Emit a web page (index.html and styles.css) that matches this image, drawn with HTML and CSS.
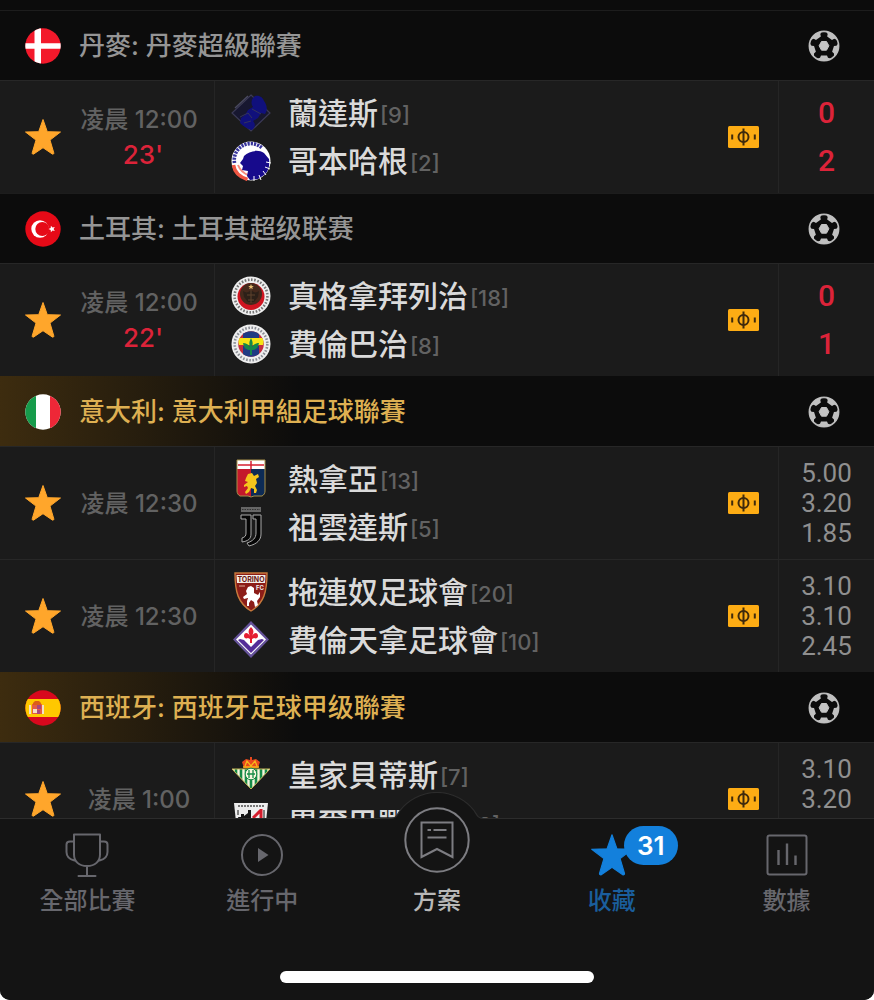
FILE: index.html
```html
<!DOCTYPE html>
<html lang="zh-Hant">
<head>
<meta charset="utf-8">
<meta name="viewport" content="width=device-width, initial-scale=1">
<title>收藏</title>
<link rel="stylesheet" href="styles.css">
</head>
<body>
<svg class="sprite" aria-hidden="true">
  <symbol id="star" viewBox="0 0 38 38">
    <path d="M19 1.500 23.300 13.700 36.500 14 26 22.100 29.800 34.900a1 1 0 0 1-1.500 1.100L19 29.700 9.700 36a1 1 0 0 1-1.500-1.100L12 22.100 1.500 14 14.700 13.700Z" fill="currentColor" stroke="currentColor" stroke-width="1" stroke-linejoin="round"/>
  </symbol>
  <symbol id="ball" viewBox="0 0 32 32">
    <clipPath id="ball-clip"><circle cx="16" cy="16" r="15"/></clipPath>
    <circle cx="16" cy="16" r="14.600" fill="none" stroke="#b9b9b9" stroke-width="1.700"/>
    <g fill="#c0c0c0" clip-path="url(#ball-clip)">
      <path id="patch" d="M13 25.500h6l1 2.300 3.500 1.200V32h-15v-3l3.500-1.200Z"/>
      <use href="#patch" transform="rotate(72 16 16)"/>
      <use href="#patch" transform="rotate(144 16 16)"/>
      <use href="#patch" transform="rotate(216 16 16)"/>
      <use href="#patch" transform="rotate(288 16 16)"/>
    </g>
    <path d="M13.500 11.500h5l2.400 4.300-2.400 4.400h-5l-2.400-4.400Z" fill="#c4c4c4" stroke="#c4c4c4" stroke-linejoin="round"/>
  </symbol>
  <symbol id="pitch" viewBox="0 0 31 22">
    <rect width="31" height="22" rx="1.500" fill="#fdac14"/>
    <g fill="none" stroke="#3f2a0c" stroke-width="2">
      <circle cx="15.500" cy="11" r="5"/><path d="M15.500 2.500v17M4.200 8.500v5M26.800 8.500v5"/>
    </g>
  </symbol>
</svg>

<div class="app">
<main class="feed">

  <section class="league">
    <header class="league-head">
      <svg class="flag" viewBox="0 0 36 36" role="img" aria-label="丹麥"><clipPath id="disc"><circle cx="18" cy="18" r="17.700"/></clipPath><g clip-path="url(#disc)"><path fill="#f3192b" d="M0 0h36v36H0z"/><path fill="#fff" d="M9.500 0h6.500v36H9.500zM0 15.200h36v5.600H0z"/></g></svg>
      <h2>丹麥: 丹麥超級聯賽</h2>
      <svg class="ball" aria-hidden="true"><use href="#ball"/></svg>
    </header>
    <article class="match">
      <div class="when"><button class="fav" aria-label="取消收藏"><svg><use href="#star"/></svg></button><div class="clock"><time>凌晨 12:00</time><strong>23'</strong></div></div>
      <div class="teams">
        <div class="team"><svg class="crest" viewBox="0 0 40 40" aria-hidden="true"><path fill="#171730" stroke="#3b3a55" stroke-width="1.200" d="M20 2 39 20 20 38 1 20Z"/><path fill="#10107c" d="M24 3c5-1 8 2 9 5 3 4 4 9 1 13l-4-1-3 5-5 3c3 3 2 7-1 9-5-1-9-4-12-7l1-5 4-3 3-5 5-3c-3-4-1-9 2-11Z"/><path stroke="#4a4a62" stroke-width="1.400" fill="none" d="M4 15 17 3"/><path stroke="#34345c" stroke-width="1" fill="none" d="M9 24l8-4 4 5M13 30l7-2M21 16l9 5"/></svg><span class="name">蘭達斯</span><span class="rank">[9]</span></div>
        <div class="team"><svg class="crest" viewBox="0 0 40 40" aria-hidden="true"><circle cx="20" cy="20" r="19.500" fill="#fff"/><path d="M3.500 22A16.500 16.500 0 0 1 31 7" fill="none" stroke="#37349b" stroke-width="3.600" stroke-dasharray="2.200 1"/><path d="M2.500 24c1 7 6 12 14 14.500" fill="none" stroke="#ef5643" stroke-width="3.500"/><path d="M7 24c2 5 5 8 10 10" fill="none" stroke="#f58c7e" stroke-width="2"/><path fill="#170a8c" d="M13 15c5-5 14-7 20-3l5 6c1 8-1 13-5 16l-6 4-8 1-3-4 1-5-6-1 1-4-3-3 3-4Z"/><path stroke="#fff" stroke-width="1" d="m28 34 2 5M32 30l3 4M34 26l5 2M35 21l5 1M23 35v5"/></svg><span class="name">哥本哈根</span><span class="rank">[2]</span></div>
      </div>
      <button class="live" aria-label="現場動畫"><svg><use href="#pitch"/></svg></button>
      <div class="score"><span>0</span><span>2</span></div>
    </article>
  </section>

  <section class="league">
    <header class="league-head">
      <svg class="flag" viewBox="0 0 36 36" role="img" aria-label="土耳其"><circle cx="18" cy="18" r="17.700" fill="#e60a17"/><circle cx="15" cy="18" r="8.700" fill="#fff"/><circle cx="17.300" cy="18" r="7" fill="#e60a17"/><path fill="#fff" d="m23.500 18 2.200-.9.200-2.400 1.600 1.800 2.300-.6-1.200 2.100 1.200 2.100-2.300-.6-1.600 1.800-.2-2.400Z"/></svg>
      <h2>土耳其: 土耳其<span lang="zh-Hans">超级联赛</span></h2>
      <svg class="ball" aria-hidden="true"><use href="#ball"/></svg>
    </header>
    <article class="match">
      <div class="when"><button class="fav" aria-label="取消收藏"><svg><use href="#star"/></svg></button><div class="clock"><time>凌晨 12:00</time><strong>22'</strong></div></div>
      <div class="teams">
        <div class="team"><svg class="crest" viewBox="0 0 40 40" aria-hidden="true"><circle cx="20" cy="20" r="19.500" fill="#eee"/><circle cx="20" cy="20" r="16.400" fill="none" stroke="#777" stroke-width="2.600" stroke-dasharray="1.600 1.600"/><circle cx="20" cy="20.500" r="13.500" fill="#d01420"/><circle cx="20" cy="18" r="11" fill="#45291c"/><path d="M12 15c3 2 5 2 8-1 3 3 5 3 8 1l-1 6-4 5h-6l-4-5Z" fill="#2c2018"/><path d="M20 12v15M16 19h8M17 24h6" stroke="#5e422c"/><path d="m20 8 .8 2h2l-1.600 1.300.6 2-1.800-1.200-1.800 1.200.6-2L17.200 10h2Z" fill="#e7bd72"/></svg><span class="name">真格拿拜列治</span><span class="rank">[18]</span></div>
        <div class="team"><svg class="crest" viewBox="0 0 40 40" aria-hidden="true"><circle cx="20" cy="20" r="19.500" fill="#eee"/><circle cx="20" cy="20" r="16.300" fill="none" stroke="#8b8e96" stroke-width="2.600" stroke-dasharray="1.600 1.600"/><clipPath id="fb"><circle cx="20" cy="20" r="12.800"/></clipPath><g clip-path="url(#fb)"><path fill="#c42d3e" d="M6 6h28v28H6z"/><path fill="#203a83" d="M12 6h16v10H12zM12 22h16v12H12z"/><path fill="#f6e415" d="M6 14h28l-2 7H8z"/></g><path fill="#16874a" d="M20 14c2 4 2 6 1 9 2-3 4-4 7-4-1 5-3 7-7 7v5h-2v-5c-4 0-6-2-7-7 3 0 5 1 7 4-1-3-1-5 1-9Z"/></svg><span class="name">費倫巴治</span><span class="rank">[8]</span></div>
      </div>
      <button class="live" aria-label="現場動畫"><svg><use href="#pitch"/></svg></button>
      <div class="score"><span>0</span><span>1</span></div>
    </article>
  </section>

  <section class="league">
    <header class="league-head top">
      <svg class="flag" viewBox="0 0 36 36" role="img" aria-label="意大利"><g clip-path="url(#disc)"><path fill="#fff" d="M0 0h36v36H0z"/><path fill="#169b4b" d="M0 0h11v36H0z"/><path fill="#ee2737" d="M25 0h11v36H25z"/></g></svg>
      <h2>意大利: 意大利甲組足球聯賽</h2>
      <svg class="ball" aria-hidden="true"><use href="#ball"/></svg>
    </header>
    <article class="match">
      <div class="when"><button class="fav" aria-label="取消收藏"><svg><use href="#star"/></svg></button><div class="clock"><time>凌晨 12:30</time></div></div>
      <div class="teams">
        <div class="team"><svg class="crest" viewBox="0 0 40 40" aria-hidden="true"><path fill="#c4192b" d="M6 1h14v37l-3-1H9c-2-1-3-3-3-5Z"/><path fill="#0d2b55" d="M20 1h14v31c0 2-1 4-3 5h-8l-3 1Z"/><path fill="#fff" d="M6 1h28v9H6z"/><path stroke="#d62031" stroke-width="1.500" d="M20 2v8M7 6h26"/><path fill="#f5c51c" d="m17 15 4-1 2 3 4-2 1 3-3 2 1 4-2 3 2 4-1 3h-2v-4l-3-1-2 4-3 2-1-2 3-4-1-2-3 1v-2l4-3-3-1 1-3Z"/><path d="M6 1h28v31c0 2-1 4-3 5h-8l-3 1-3-1H9c-2-1-3-3-3-5Z" fill="none" stroke="#a8904a"/></svg><span class="name">熱拿亞</span><span class="rank">[13]</span></div>
        <div class="team"><svg class="crest" viewBox="0 0 40 40" aria-hidden="true"><path fill="#666" d="M10 0h20v5H10z"/><path stroke="#333" stroke-dasharray="1.500 1" d="M11 2.500h18"/><path fill="#050505" stroke="#aaa" d="M10 8h10v19c0 5-3 7-9 8v-4c3-1 4-2 4-5V12h-5ZM22 8h8v19c0 6-4 10-12 12l-2-3c6-2 9-5 9-10V12h-3Z"/></svg><span class="name">祖雲達斯</span><span class="rank">[5]</span></div>
      </div>
      <button class="live" aria-label="現場動畫"><svg><use href="#pitch"/></svg></button>
      <div class="odds"><span>5.00</span><span>3.20</span><span>1.85</span></div>
    </article>
    <article class="match">
      <div class="when"><button class="fav" aria-label="取消收藏"><svg><use href="#star"/></svg></button><div class="clock"><time>凌晨 12:30</time></div></div>
      <div class="teams">
        <div class="team"><svg class="crest" viewBox="0 0 40 40" aria-hidden="true"><path fill="#8c1d18" stroke="#c7793c" stroke-width="1.400" d="M4 1h32c0 19-3 30-16 38C7 31 4 20 4 1Z"/><path fill="#f3eee7" d="M5.500 3h29l-.5 8H6z"/><text class="crest-word" x="20" y="9.500">TORINO</text><text class="crest-mark" x="29" y="18">FC</text><path d="M8 14h6" stroke="#d8aa94"/><path fill="#fff" d="m17 15 3-1 3 2v5l4 2 2-3v5l-3 4 1 4-3 2-1-5-3-2-2 3v3h-2v-5l1-3-4 1-1-2 4-3-1-3Z"/></svg><span class="name">拖連奴足球會</span><span class="rank">[20]</span></div>
        <div class="team"><svg class="crest" viewBox="0 0 40 40" aria-hidden="true"><path fill="#65529a" d="m20 1 18 18.500L20 38 2 19.500Z"/><path fill="#fff" d="m20 4.500 15 15-15 15-15-15Z"/><path fill="#542c98" d="m9 19 4 1 7 7 7-7 4-1 2 1-13 13L7 20Z"/><path fill="#e51e32" d="M20 7c3 3 3 5 1 9 2-4 6-4 6 0 0 2-2 3-4 2l-2 1v4h-2v-4l-2-1c-2 1-4 0-4-2 0-4 4-4 6 0-2-4-2-6 1-9Z"/></svg><span class="name">費倫天拿足球會</span><span class="rank">[10]</span></div>
      </div>
      <button class="live" aria-label="現場動畫"><svg><use href="#pitch"/></svg></button>
      <div class="odds"><span>3.10</span><span>3.10</span><span>2.45</span></div>
    </article>
  </section>

  <section class="league">
    <header class="league-head top">
      <svg class="flag" viewBox="0 0 36 36" role="img" aria-label="西班牙"><g clip-path="url(#disc)"><path fill="#d8081d" d="M0 0h36v36H0z"/><path fill="#ffc800" d="M0 9h36v18H0z"/></g><path fill="#e35b43" d="M7 14h10v10H7z"/><path fill="#f4dfc6" d="M4 15h2v9H4zM17 15h2v9h-2zM8 19h4v4H8z"/><path fill="#a8447c" d="M12 15h4v4h-4zM12 20h3v4h-3z"/><path fill="#db5d18" d="m8 13 2-2h4l2 2v2H8z"/></svg>
      <h2>西班牙: 西班牙足球甲级聯賽</h2>
      <svg class="ball" aria-hidden="true"><use href="#ball"/></svg>
    </header>
    <article class="match">
      <div class="when"><button class="fav" aria-label="取消收藏"><svg><use href="#star"/></svg></button><div class="clock"><time>凌晨 1:00</time></div></div>
      <div class="teams">
        <div class="team"><svg class="crest" viewBox="0 0 40 40" aria-hidden="true"><path fill="#e9471d" d="m13 13-2-6 4-3 4 1V2h2v3l4-1 4 3-2 6Z"/><path d="m14 11 2-5 4 5 4-5 2 5M12 12h16" stroke="#f6b719" stroke-width="1.300" fill="none"/><clipPath id="tri"><path d="M1 14h38L20 34Z"/></clipPath><g clip-path="url(#tri)"><path fill="#f7f6df" d="M0 13h40v22H0z"/><path stroke="#168b47" stroke-width="2.600" d="M5 13v22M10 13v22M15 13v22M20 13v22M25 13v22M30 13v22M35 13v22"/></g><path d="M1 14h38L20 34Z" fill="none" stroke="#c5b756"/><circle cx="20" cy="19" r="5.800" fill="#f7f6df" stroke="#168b47"/><path d="M18 15v8M22 15v8M16 19h8" stroke="#168b47" stroke-width="1.300"/></svg><span class="name">皇家貝蒂斯</span><span class="rank">[7]</span></div>
        <div class="team"><svg class="crest" viewBox="0 0 40 40" aria-hidden="true"><path fill="#eee" d="M3 0h34l-3 28-14 11L6 28Z"/><path d="M7 3h26" stroke="#777" stroke-width="2" stroke-dasharray="2 1"/><path fill="#151515" d="M7 14h3v-3h3v2l4-3V7h3v23l-8-2Z"/><path stroke="#d41c2c" stroke-width="3" d="m22 15 8-8M30 6v24M25 15v15"/><path stroke="#151515" d="M7 7v5M33 7v8"/></svg><span class="name">畢爾巴鄂競技</span><span class="rank">[8]</span></div>
      </div>
      <button class="live" aria-label="現場動畫"><svg><use href="#pitch"/></svg></button>
      <div class="odds"><span>3.10</span><span>3.20</span></div>
    </article>
  </section>
</main>

<footer class="dock">
  <svg class="bump" viewBox="0 0 116 50" aria-hidden="true"><path d="M0 26.500H12C17 26.500 18 23 21 18.500A47 47 0 0 1 95 18.500C98 23 99 26.500 104 26.500H116V50H0Z" fill="#141414"/><path d="M0 26.500H12C17 26.500 18 23 21 18.500A47 47 0 0 1 95 18.500C98 23 99 26.500 104 26.500H116" fill="none" stroke="#2c2c2c" stroke-width="1.200"/></svg>
  <nav class="tabs">
    <a href="#all"><svg class="icon" viewBox="0 0 44 44" aria-hidden="true"><g fill="none" stroke="currentColor" stroke-width="2" stroke-linejoin="round" stroke-linecap="round"><path d="M9 1.500h26v20c0 7-5 11.500-13 11.500S9 28.500 9 21.500ZM22 33v9.500M13.500 43h17M8.500 8.500H5c-2 0-3.500 1-3.500 3V19c0 5 4 7.500 8 8.500M35.500 8.500H39c2 0 3.500 1 3.500 3V19c0 5-4 7.500-8 8.500"/></g></svg><span>全部比賽</span></a>
    <a href="#live"><svg class="icon" viewBox="0 0 44 44" aria-hidden="true"><circle cx="22" cy="22" r="20" fill="none" stroke="currentColor" stroke-width="2"/><path d="m18 15 10.500 7L18 29Z" fill="currentColor"/></svg><span>進行中</span></a>
    <a href="#plan" class="plan"><svg class="icon big" viewBox="0 0 66 66" aria-hidden="true"><g fill="none" stroke="currentColor" stroke-width="2"><circle cx="33" cy="33" r="31.700"/><path d="M17.500 15.500h31v34.500L33 42 17.500 50ZM23.500 23h3.500M29.500 23h13M23.500 30.500h19"/></g></svg><span>方案</span></a>
    <a href="#favourites" class="current" aria-current="page"><svg class="icon" aria-hidden="true"><use href="#star"/></svg><b class="count">31</b><span>收藏</span></a>
    <a href="#data"><svg class="icon" viewBox="0 0 44 44" aria-hidden="true"><g fill="none" stroke="currentColor" stroke-width="2"><rect x="2.500" y="2.500" width="39" height="39" rx="2"/><path d="M13.500 17v15M22 10.500V32M30.500 22.500V32" stroke-width="2.400"/></g></svg><span>數據</span></a>
  </nav>
  <div class="home-bar"></div>
</footer>
</div>
</body>
</html>
```

FILE: styles.css
```css
* { box-sizing: border-box; }

body {
  margin: 0;
  background: #fff;
  font-family: Inter, "Noto Sans CJK TC", sans-serif;
}

:lang(zh-Hans) { font-family: Inter, "Noto Sans CJK SC", sans-serif; }

button { padding: 0; border: 0; background: none; color: inherit; cursor: pointer; }
svg { display: block; flex: none; }
.sprite { position: absolute; width: 0; height: 0; }

.app {
  display: flex;
  flex-direction: column;
  height: 100vh;
  overflow: hidden;
  border-radius: 0 0 10px 10px;
  background: #141414;
}

.feed {
  flex: 1;
  min-height: 0;
  overflow: hidden;
  padding-top: 10px;
  background: #0c0c0c;
}

.league-head {
  display: flex;
  align-items: center;
  gap: 18px;
  height: 70px;
  padding: 0 34px 0 25px;
  border-top: 1px solid #1d1d1d;
  background: #0c0c0c;
  color: #959595;
}

.league-head.top {
  border-top-color: transparent;
  background: linear-gradient(90deg, #3d2c0f, #0c0c0c 300px);
  color: #deb052;
}

.league-head h2 {
  flex: 1;
  margin: 0;
  font-size: 26px;
  font-weight: 500;
  line-height: 32px;
  white-space: nowrap;
}

.flag { width: 36px; height: 36px; }
.ball { width: 32px; height: 32px; }

.match {
  display: flex;
  align-items: stretch;
  height: 113px;
  border-top: 1px solid #272727;
  background: #1b1b1b;
}

.when {
  display: flex;
  align-items: center;
  width: 215px;
  padding-left: 24px;
  border-right: 1px solid #252525;
}

.fav, .fav svg { width: 38px; height: 38px; color: #ffa62b; }

.clock {
  flex: 1;
  display: flex;
  flex-direction: column;
  align-items: center;
  padding-left: 2px;
  color: #626262;
  font-size: 24px;
  font-weight: 500;
  line-height: 35px;
  white-space: nowrap;
}

.clock strong { padding-left: 8px; color: #dc2339; font-size: 26px; font-weight: 500; }

.teams {
  flex: 1;
  min-width: 0;
  display: flex;
  flex-direction: column;
  justify-content: center;
  padding-left: 16px;
}

.team { display: flex; align-items: center; height: 48px; white-space: nowrap; }
.crest { width: 40px; height: 40px; margin-right: 17px; }
.crest-word { font: 700 7px Inter, sans-serif; text-anchor: middle; fill: #6c1713; }
.crest-mark { font: 700 6px Inter, sans-serif; text-anchor: middle; fill: #eee; }
.name { color: #dadada; font-size: 30px; font-weight: 500; line-height: 48px; }
.rank { padding: 4px 0 0 2px; color: #626262; font-size: 22px; font-weight: 500; line-height: 44px; }

.live { padding: 0 19px; }
.live svg { width: 31px; height: 22px; }

.score, .odds {
  display: flex;
  flex-direction: column;
  align-items: center;
  width: 96px;
  border-left: 1px solid #252525;
  font-family: Roboto, sans-serif;
}

.score { justify-content: center; color: #dc2339; font-size: 30px; font-weight: 500; line-height: 48px; }
.odds { padding-top: 11px; color: #8f8f8f; font-size: 26px; line-height: 30px; }

.dock {
  position: relative;
  padding: 12px 0 17px;
  border-top: 1px solid #2c2c2c;
  background: #141414;
}

/* Raised notch behind the centre tab */
.bump {
  position: absolute;
  top: -27px;
  left: calc(50% - 58px);
  width: 116px;
  height: 50px;
}

.tabs { position: relative; display: grid; grid-template-columns: repeat(5, 1fr); }

.tabs a {
  position: relative;
  display: flex;
  flex-direction: column;
  align-items: center;
  justify-content: flex-end;
  gap: 6px;
  color: #67676d;
  font-size: 24px;
  font-weight: 500;
  line-height: 36px;
  text-decoration: none;
}

.icon { width: 44px; height: 44px; margin-top: 2px; }
.icon.big { width: 66px; height: 66px; margin: -32px 0 4px; }
.tabs .plan { color: #7d7d82; }
.plan span { color: #b8b8b8; }
.tabs .current { color: #1380dc; }
.current span { color: #1a5e9c; }

.count {
  position: absolute;
  top: -5px;
  left: calc(50% + 12px);
  width: 54px;
  border-radius: 20px;
  background: #1380dc;
  color: #fff;
  font-size: 26px;
  font-weight: 600;
  line-height: 39px;
  text-align: center;
}

.home-bar { width: 36%; height: 12px; margin: 52px auto 0; border-radius: 6px; background: #fff; }
```
